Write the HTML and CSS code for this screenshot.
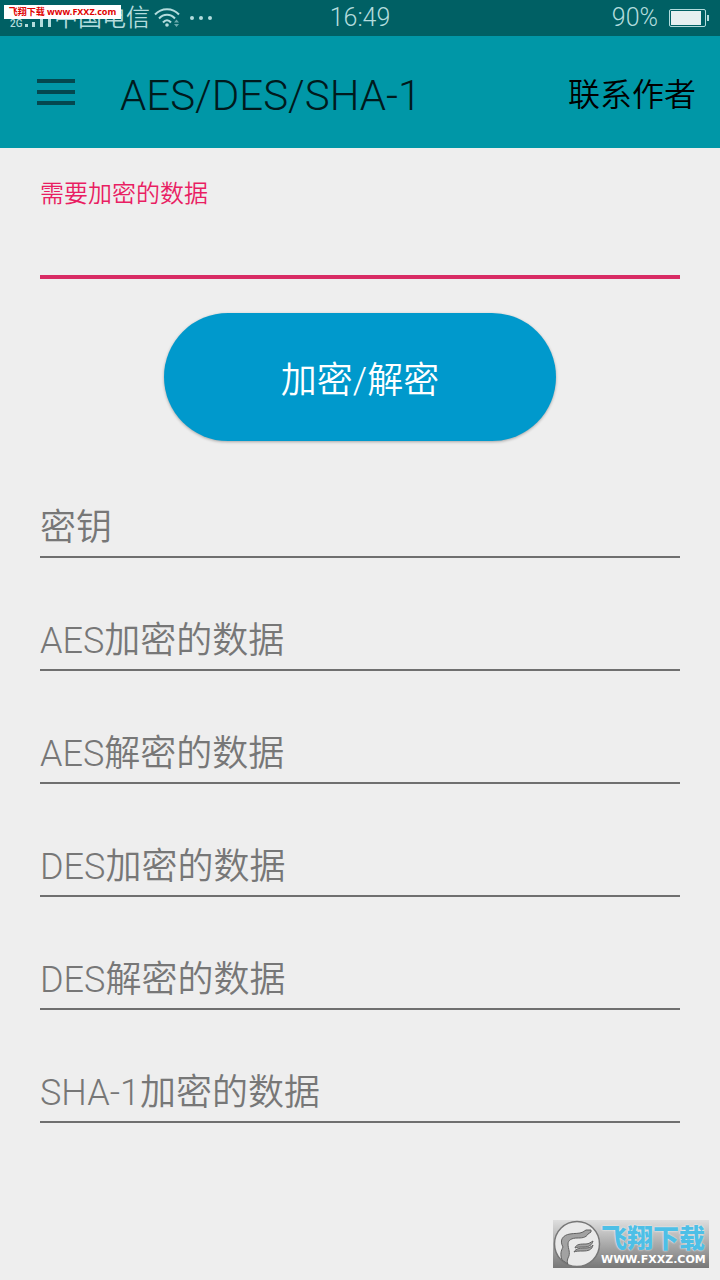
FILE: index.html
```html
<!DOCTYPE html>
<html lang="zh-CN">
  <head>
    <meta charset="utf-8">
    <meta name="viewport" content="width=device-width, initial-scale=1">
    <title>AES/DES/SHA-1</title>
    <link rel="stylesheet" href="styles.css">
  </head>
  <body>
    <div class="statusbar">
      <div class="network">
        <svg class="signal" width="42" height="20" viewBox="0 0 42 20">
          <rect x="15" y="15" width="3" height="3"/>
          <rect x="22" y="13" width="3" height="5"/>
          <rect x="30" y="10" width="3" height="8"/>
          <rect x="38" y="6" width="3" height="12"/>
        </svg>
        <span class="net-type">2G</span>
        <span class="carrier">中国电信</span>
        <svg width="26" height="22" viewBox="0 0 26 22">
          <g fill="none" stroke="#b3dcdd" stroke-width="2">
            <path d="M1 7.500C7.500 0.500 18.500 0.500 25 7.500"/>
            <path d="M5 11.500C9.500 6.500 16.500 6.500 21 11.500"/>
            <path d="M9 15.500C11.500 12.500 14.500 12.500 17 15.500"/>
          </g>
          <circle cx="13" cy="18" r="1.800"/>
          <path d="M20 15.500l2.500-3 2.500 3zM20 17l2.500 3 2.500-3z" opacity="0.600"/>
        </svg>
        <svg class="dots" width="24" height="6" viewBox="0 0 24 6">
          <circle cx="3" cy="3" r="2"/>
          <circle cx="12" cy="3" r="2"/>
          <circle cx="21" cy="3" r="2"/>
        </svg>
      </div>
      <span class="clock">16:49</span>
      <div class="battery">
        <span>90%</span>
        <svg width="42" height="20" viewBox="0 0 42 20">
          <rect x="1.500" y="1.500" width="36" height="17" rx="1.500" fill="none" stroke="#b3dcdd"/>
          <rect x="3" y="3" width="30" height="14" fill="#e6f0f1"/>
          <rect x="39" y="7" width="2" height="6"/>
        </svg>
      </div>
    </div>

    <header class="toolbar">
      <button type="button" class="menu" aria-label="菜单">
        <svg width="38" height="26" viewBox="0 0 38 26">
          <path d="M0 0h38v4H0zM0 11h38v4H0zM0 22h38v4H0z"/>
        </svg>
      </button>
      <h1>AES/DES/SHA-1</h1>
      <button type="button" class="contact">联系作者</button>
    </header>

    <form>
      <label for="source">需要加密的数据</label>
      <input type="text" id="source" class="source">
      <button type="button" class="convert">加密/解密</button>
      <input type="text" class="field" placeholder="密钥" aria-label="密钥">
      <input type="text" class="field" placeholder="AES加密的数据" aria-label="AES加密的数据">
      <input type="text" class="field" placeholder="AES解密的数据" aria-label="AES解密的数据">
      <input type="text" class="field" placeholder="DES加密的数据" aria-label="DES加密的数据">
      <input type="text" class="field" placeholder="DES解密的数据" aria-label="DES解密的数据">
      <input type="text" class="field" placeholder="SHA-1加密的数据" aria-label="SHA-1加密的数据">
    </form>

    <div class="tag">飞翔下载 www.FXXZ.com</div>

    <div class="logo">
      <svg width="48" height="48" viewBox="0 0 48 48">
        <circle cx="24" cy="24" r="22.500" fill="#e9e9e9" stroke="#777" stroke-width="1.500"/>
        <g fill="#a2a2a2" stroke="#626262" stroke-width="1" stroke-linejoin="round">
          <path d="M9 40C7 34 8 31 10 27C6 20 10 15 17 14C22 13 26 14 30 12L33 10L38 10L38 12L35 14C33 18 28 18 24 18C19 18 15 20 15 24C15 29 18 33 15 38C14 41 14 43 15 44Z"/>
          <path d="M22 28C23 24 28 24 33 24C36 24 38 22 40 21C39 25 36 27 31 27C27 27 24 27 22 28Z"/>
          <path d="M21 32C23 28 28 28 33 28C36 28 38 27 40 25C39 30 35 31 30 31C26 31 23 31 21 32Z"/>
        </g>
      </svg>
      <div class="logo-text">
        <strong>飞翔下载</strong>
        <small>WWW.FXXZ.COM</small>
      </div>
    </div>
  </body>
</html>
```
FILE: styles.css
```css
* {
  box-sizing: border-box;
}

body {
  margin: 0;
  min-height: 100vh;
  background-color: #eeeeee;
  font-family: Roboto, "Noto Sans CJK SC", sans-serif;
  font-weight: 350;
}

button, input {
  font: inherit;
  border: none;
  background: none;
  padding: 0;
}

h1 {
  margin: 0;
}

.statusbar {
  display: grid;
  grid-template-columns: 1fr auto 1fr;
  align-items: center;
  height: 36px;
  padding: 0 10px;
  background-color: #006064;
  color: #b3dcdd;
  fill: #b3dcdd;
  font-size: 25px;
  line-height: 36px;
}

.network {
  position: relative;
  display: flex;
  align-items: center;
}

.signal {
  margin-top: 2px;
}

.net-type {
  position: absolute;
  left: 0;
  top: 19px;
  font-size: 10px;
  font-weight: 500;
  line-height: 10px;
}

.carrier {
  margin: 0 4px 0 2px;
  font-size: 24px;
}

.dots {
  margin-left: 9px;
}

.battery {
  display: flex;
  align-items: center;
  justify-content: flex-end;
  gap: 10px;
}

.toolbar {
  display: flex;
  align-items: center;
  height: 112px;
  padding: 0 24px 0 37px;
  background-color: #0097a7;
}

.menu {
  display: flex;
  margin-right: 45px;
  fill: #04484f;
}

.toolbar h1 {
  flex: 1;
  padding-top: 6px;
  font-size: 42px;
  font-weight: 350;
  color: #001a1d;
}

.contact {
  font-size: 32px;
  color: #000;
}

form {
  display: flex;
  flex-direction: column;
  padding: 28px 40px;
}

label {
  font-size: 24px;
  line-height: 36px;
  color: #e91e63;
}

input {
  width: 100%;
  outline: none;
  border-radius: 0;
}

.source {
  height: 67px;
  border-bottom: 4px solid #d82b64;
  font-size: 36px;
}

.convert {
  align-self: center;
  width: 392px;
  max-width: 100%;
  height: 128px;
  margin: 34px 0 46px;
  border-radius: 64px;
  background-color: #0099cc;
  box-shadow: 0 1px 3px rgba(0, 0, 0, 0.3);
  color: #fff;
  font-size: 36px;
}

.field {
  height: 71px;
  margin-bottom: 42px;
  padding-top: 12px;
  border-bottom: 2px solid #6f6f6f;
  font-size: 36px;
}

.field::placeholder {
  color: #777;
  opacity: 1;
}

.tag {
  position: absolute;
  top: 5px;
  left: 4px;
  width: 117px;
  background-color: #fff;
  color: #e00000;
  font-family: "Noto Sans", "Noto Sans CJK SC", sans-serif;
  font-size: 9px;
  font-weight: bold;
  line-height: 14px;
  text-align: center;
  white-space: nowrap;
}

.logo {
  position: fixed;
  right: 11px;
  bottom: 12px;
  display: flex;
  width: 156px;
  height: 48px;
  background: linear-gradient(#dedede, #777);
}

.logo-text {
  display: flex;
  flex-direction: column;
  font-family: "DejaVu Sans", "Noto Sans CJK SC", sans-serif;
  white-space: nowrap;
}

.logo-text strong {
  padding-top: 4px;
  color: #4dbfe6;
  font-size: 26px;
  font-weight: 900;
  line-height: 30px;
  text-shadow: 0 0 2px #fff;
}

.logo-text small {
  color: #fff;
  font-size: 11px;
  font-weight: bold;
  line-height: 12px;
}
```
